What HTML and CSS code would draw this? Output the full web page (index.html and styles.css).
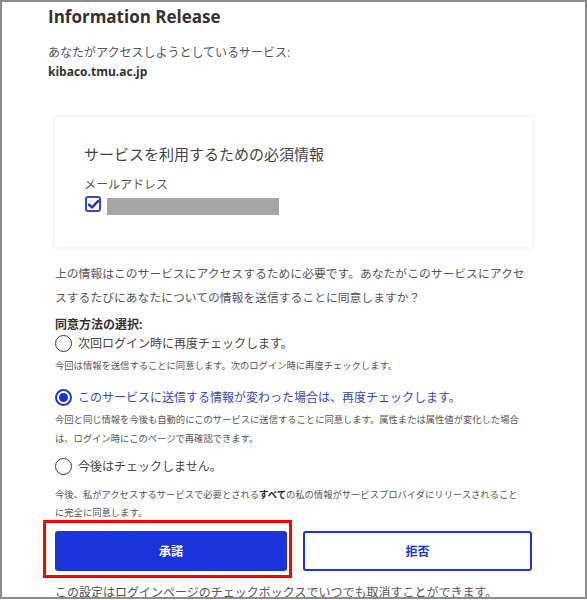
FILE: index.html
```html
<!DOCTYPE html>
<html lang="ja">
<head>
    <meta charset="UTF-8">
    <title>Information Release</title>
    <link rel="stylesheet" href="styles.css">
</head>
<body>
    <div class="frame">
        <h1 class="title">Information Release</h1>
        <p class="service-label">あなたがアクセスしようとしているサービス:</p>
        <p class="service-name">kibaco.tmu.ac.jp</p>

        <div class="main">
            <!-- Required attributes card -->
            <div class="card">
                <h2 class="card-title">サービスを利用するための必須情報</h2>
                <div class="attr-name">メールアドレス</div>
                <div class="attr-row">
                    <span class="checkbox">
                        <svg width="11" height="9" viewBox="0 0 11 9"><path d="M1 4.6 L4 7.5 L10 1.2" fill="none" stroke="#1c2fc4" stroke-width="2.4" stroke-linecap="round" stroke-linejoin="round"/></svg>
                    </span>
                    <span class="masked"></span>
                </div>
            </div>

            <p class="question">上の情報はこのサービスにアクセスするために必要です。あなたがこのサービスにアクセスするたびにあなたについての情報を送信することに同意しますか？</p>

            <div class="consent">
                <div class="consent-title">同意方法の選択:</div>

                <label class="option">
                    <input type="radio" name="consent">
                    <span>次回ログイン時に再度チェックします。</span>
                </label>
                <p class="desc">今回は情報を送信することに同意します。次のログイン時に再度チェックします。</p>

                <label class="option option-2 selected">
                    <input type="radio" name="consent" checked>
                    <span>このサービスに送信する情報が変わった場合は、再度チェックします。</span>
                </label>
                <p class="desc">今回と同じ情報を今後も自動的にこのサービスに送信することに同意します。属性または属性値が変化した場合は、ログイン時にこのページで再確認できます。</p>

                <label class="option option-3">
                    <input type="radio" name="consent">
                    <span>今後はチェックしません。</span>
                </label>
                <p class="desc desc-last">今後、私がアクセスするサービスで必要とされる<b>すべて</b>の私の情報がサービスプロバイダにリリースされることに完全に同意します。</p>
            </div>

            <div class="actions">
                <span class="highlight"></span>
                <button class="btn btn-accept">承諾</button>
                <button class="btn btn-reject">拒否</button>
            </div>

            <p class="note">この設定はログインページのチェックボックスでいつでも取消すことができます。</p>
        </div>
    </div>
</body>
</html>
```

FILE: styles.css
```css
* {
    box-sizing: border-box;
}

body {
    margin: 0;
    font-family: "Open Sans", "Noto Sans CJK JP", sans-serif;
    color: #555;
    background: #fff;
}

.frame {
    width: 587px;
    height: 599px;
    border: 2px solid #8c8c8c;
    padding: 4px 0 0 46px;
    overflow: hidden;
}

.title {
    margin: 0;
    font-size: 17px;
    line-height: 22px;
    font-weight: 700;
    color: #333;
}

.service-label,
.service-name {
    margin: 0;
    font-size: 12px;
    line-height: 19px;
}

.service-label {
    margin-top: 15px;
}

.service-name {
    font-weight: 700;
    color: #333;
}

.main {
    width: 477px;
    margin-left: 7px;
}

/* card */
.card {
    margin-top: 36px;
    height: 130px;
    padding: 27px 0 0 29px;
    background: #fff;
    box-shadow: 0 0 6px rgba(0, 0, 0, 0.09);
}

.card-title {
    margin: 0;
    font-size: 15px;
    line-height: 20px;
    font-weight: 400;
    color: #444;
}

.attr-name {
    margin-top: 13px;
    font-size: 12px;
    line-height: 16px;
    color: #555;
}

.attr-row {
    display: flex;
    align-items: flex-start;
    gap: 6px;
    margin-top: 3px;
    padding-left: 1px;
}

.checkbox {
    width: 16px;
    height: 16px;
    border: 2px solid #3d45c9;
    border-radius: 3px;
    display: flex;
    align-items: center;
    justify-content: center;
}

.masked {
    width: 172px;
    height: 17px;
    margin-top: 2px;
    background: #a6a6a6;
}

.question {
    margin: 14px 0 0;
    font-size: 11.8px;
    line-height: 24px;
}

/* consent options */
.consent-title {
    margin-top: 7px;
    font-size: 12px;
    line-height: 18px;
    font-weight: 700;
    color: #333;
}

.option {
    display: flex;
    align-items: center;
    gap: 6px;
    height: 18px;
    font-size: 12px;
    color: #444;
}

.option input {
    appearance: none;
    margin: 0;
    width: 17px;
    height: 17px;
    border: 1.6px solid #3a3a3a;
    border-radius: 50%;
    display: grid;
    place-content: center;
}

.option input:checked {
    border: 2px solid #2036d0;
}

.option input:checked::before {
    content: "";
    width: 9px;
    height: 9px;
    border-radius: 50%;
    background: #1b31d4;
}

.option.selected {
    color: #3346cf;
}

.option-2 {
    margin-top: 13px;
}

.option-3 {
    margin-top: 9px;
}

.desc {
    margin: 4px 0 0;
    max-width: 470px;
    font-size: 9.3px;
    line-height: 19px;
    color: #555;
}

.desc b {
    color: #222;
}

.desc-last {
    margin-top: 11px;
    line-height: 18px;
}

/* buttons */
.actions {
    position: relative;
    display: flex;
    gap: 16px;
    margin-top: 9px;
}

.highlight {
    position: absolute;
    left: -12px;
    top: -11px;
    width: 249px;
    height: 58px;
    border: 3px solid #f00;
}

.btn {
    height: 40px;
    font-family: inherit;
    font-size: 12px;
    font-weight: 700;
    border-radius: 3px;
    cursor: pointer;
}

.btn-accept {
    width: 232px;
    background: #1a33da;
    color: #fff;
    border: none;
}

.btn-reject {
    flex: 1;
    background: #fff;
    color: #1a33da;
    border: 2px solid #1a33da;
}

.note {
    margin: 13px 0 0;
    font-size: 12px;
    line-height: 18px;
}
```
